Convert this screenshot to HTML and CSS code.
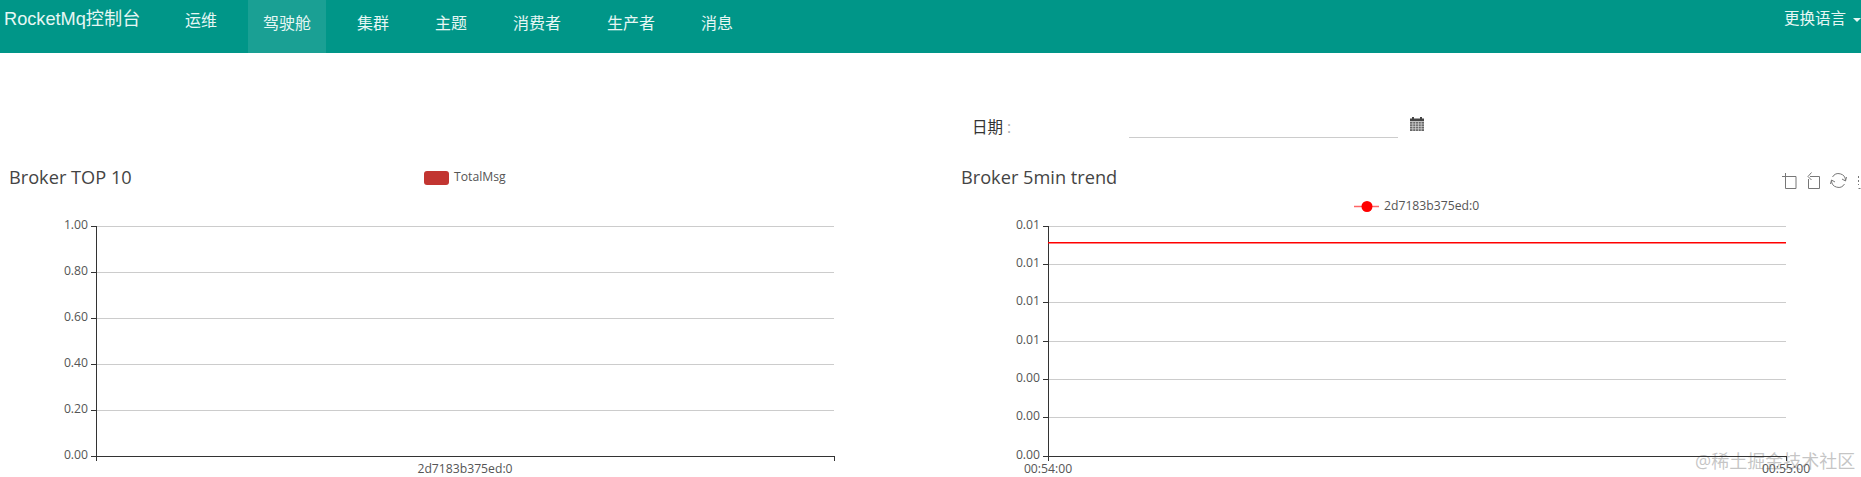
FILE: index.html
```html
<!DOCTYPE html>
<html>
<head>
    <meta charset="utf-8">
    <title>RocketMq控制台</title>
    <link rel="stylesheet" href="styles.css">
</head>
<body>
    <header class="navbar">
        <a class="brand">RocketMq控制台</a>
        <nav class="nav">
            <a class="nav-item nav-first">运维</a>
            <a class="nav-item active">驾驶舱</a>
            <a class="nav-item">集群</a>
            <a class="nav-item">主题</a>
            <a class="nav-item">消费者</a>
            <a class="nav-item">生产者</a>
            <a class="nav-item">消息</a>
        </nav>
        <a class="lang">更换语言<span class="caret"></span></a>
    </header>

    <div class="date-row">
        <label class="date-label" for="date">日期 <span class="colon">:</span></label>
        <input class="date-input" id="date" type="text">
        <svg class="calendar" width="14" height="14" viewBox="0 0 14 14">
            <path fill="#444" d="M2 0h2v1.500H2zM10 0h2v1.500h-2zM0 1.500h14V4H0z"/>
            <path fill="#666" d="M0 4.600h14V14H0z"/>
            <path stroke="#ddd" stroke-width=".7" d="M0 7h14M0 9.400h14M0 11.800h14M2.800 5v9M5.600 5v9M8.400 5v9M11.200 5v9"/>
        </svg>
    </div>

    <div class="charts">
        <svg class="chart chart-left" viewBox="0 160 953 317">
            <text class="chart-title" x="9" y="184">Broker TOP 10</text>
            <rect x="424" y="171" width="25" height="14" rx="3" fill="#c23531"/>
            <text class="label" x="454" y="181">TotalMsg</text>

            <path class="grid" d="M96 226.500H834M96 272.500H834M96 318.500H834M96 364.500H834M96 410.500H834"/>
            <path class="axis" d="M96.500 226V461M91 226.500H96M91 272.500H96M91 318.500H96M91 364.500H96M91 410.500H96M91 456.500H834.500M834.500 456V461"/>
            <text class="label end" x="88" y="229">1.00</text>
            <text class="label end" x="88" y="275">0.80</text>
            <text class="label end" x="88" y="321">0.60</text>
            <text class="label end" x="88" y="367">0.40</text>
            <text class="label end" x="88" y="413">0.20</text>
            <text class="label end" x="88" y="459">0.00</text>
            <text class="label mid" x="465" y="473">2d7183b375ed:0</text>
        </svg>

        <svg class="chart chart-right" viewBox="953 160 908 317">
            <text class="chart-title" x="961" y="184">Broker 5min trend</text>

            <g class="tool">
                <path d="M1782 176.500H1796V188.500H1785.500V173"/>
                <path d="M1810 176.500H1819.500V188.500H1808.500V179M1811.500 172.500L1808 176.500L1811.500 180"/>
                <path d="M1832.500 177A7 7 0 0 1 1845.500 180.500M1844.500 184A7 7 0 0 1 1831.500 180.500M1846.500 177L1845.500 181L1842 179M1830.500 184L1831.500 180L1835 182"/>
                <path class="tool-clip" d="M1858.500 176V185M1858.500 188.500H1861"/>
            </g>

            <path class="legend-line" d="M1354 206.500H1379"/>
            <circle cx="1367" cy="206.500" r="5.500" fill="#f00"/>
            <text class="label" x="1384" y="210">2d7183b375ed:0</text>

            <path class="grid" d="M1048 226.500H1786M1048 264.500H1786M1048 302.500H1786M1048 341.500H1786M1048 379.500H1786M1048 417.500H1786"/>
            <path class="axis" d="M1048.500 226V461M1043 226.500H1048M1043 264.500H1048M1043 302.500H1048M1043 341.500H1048M1043 379.500H1048M1043 417.500H1048M1043 456.500H1786.500M1786.500 456V461"/>
            <path class="series" d="M1048 242.700H1786"/>
            <text class="label end" x="1040" y="229">0.01</text>
            <text class="label end" x="1040" y="267">0.01</text>
            <text class="label end" x="1040" y="305">0.01</text>
            <text class="label end" x="1040" y="344">0.01</text>
            <text class="label end" x="1040" y="382">0.00</text>
            <text class="label end" x="1040" y="420">0.00</text>
            <text class="label end" x="1040" y="459">0.00</text>
            <text class="label mid" x="1048" y="473">00:54:00</text>
            <text class="label mid" x="1786" y="473">00:55:00</text>
        </svg>
    </div>

    <div class="watermark">@稀土掘金技术社区</div>
</body>
</html>
```

FILE: styles.css
```css
html, body {
    margin: 0;
    height: 477px;
    overflow: hidden;
    background: #fff;
    font-family: "Open Sans", "Noto Sans CJK SC", sans-serif;
    color: #333;
}

.navbar {
    display: flex;
    height: 53px;
    background: #009688;
    color: #e6f7f4;
    font-size: 16px;
    font-family: "Liberation Sans", "Noto Sans CJK SC", sans-serif;
}
.brand {
    width: 166px;
    margin-left: 4px;
    font-size: 18.200px;
    line-height: 38px;
    white-space: nowrap;
}
.nav {
    display: flex;
    gap: 16px;
}
.nav-item {
    padding: 0 15px;
    line-height: 47px;
}
.nav-first {
    line-height: 42px;
}
.active {
    background: #1aa094;
}
.lang {
    margin-left: auto;
    width: 77px;
    white-space: nowrap;
    font-size: 15.500px;
    line-height: 38px;
}
.caret {
    display: inline-block;
    margin-left: 7px;
    vertical-align: middle;
    border-top: 4px solid #e6f7f4;
    border-left: 4px solid transparent;
    border-right: 4px solid transparent;
}

.date-row {
    display: flex;
    align-items: flex-start;
    height: 107px;
    padding-left: 972px;
    font-size: 15.500px;
}
.date-label {
    width: 157px;
    margin-top: 63px;
    line-height: 22px;
}
.colon {
    color: #aaa;
}
.date-input {
    box-sizing: border-box;
    width: 269px;
    height: 24px;
    margin-top: 61px;
    padding: 0;
    border: 0;
    border-bottom: 1px solid #ccc;
    outline: 0;
}
.calendar {
    margin: 64px 0 0 12px;
}

.charts {
    display: flex;
    position: relative;
    z-index: 1;
    height: 317px;
}
.chart {
    display: block;
    height: 317px;
}
.chart-left {
    width: 953px;
}
.chart-right {
    width: 908px;
}
.chart-title {
    font-size: 18.200px;
    fill: #444;
}
.label {
    font-size: 12.200px;
    fill: #555;
}
.end {
    text-anchor: end;
}
.mid {
    text-anchor: middle;
}
.grid {
    stroke: #ccc;
    fill: none;
}
.axis {
    stroke: #333;
    fill: none;
}
.series {
    stroke: #f00;
    stroke-width: 1.500;
    fill: none;
}
.legend-line {
    stroke: #f66;
    stroke-width: 1.500;
}
.tool path {
    stroke: #777;
    fill: none;
}
.tool .tool-clip {
    stroke-dasharray: 2 2;
}

.watermark {
    position: absolute;
    left: 1695px;
    top: 449px;
    font-size: 18px;
    line-height: 24px;
    color: rgba(140, 140, 140, .5);
    white-space: nowrap;
    pointer-events: none;
}
```
